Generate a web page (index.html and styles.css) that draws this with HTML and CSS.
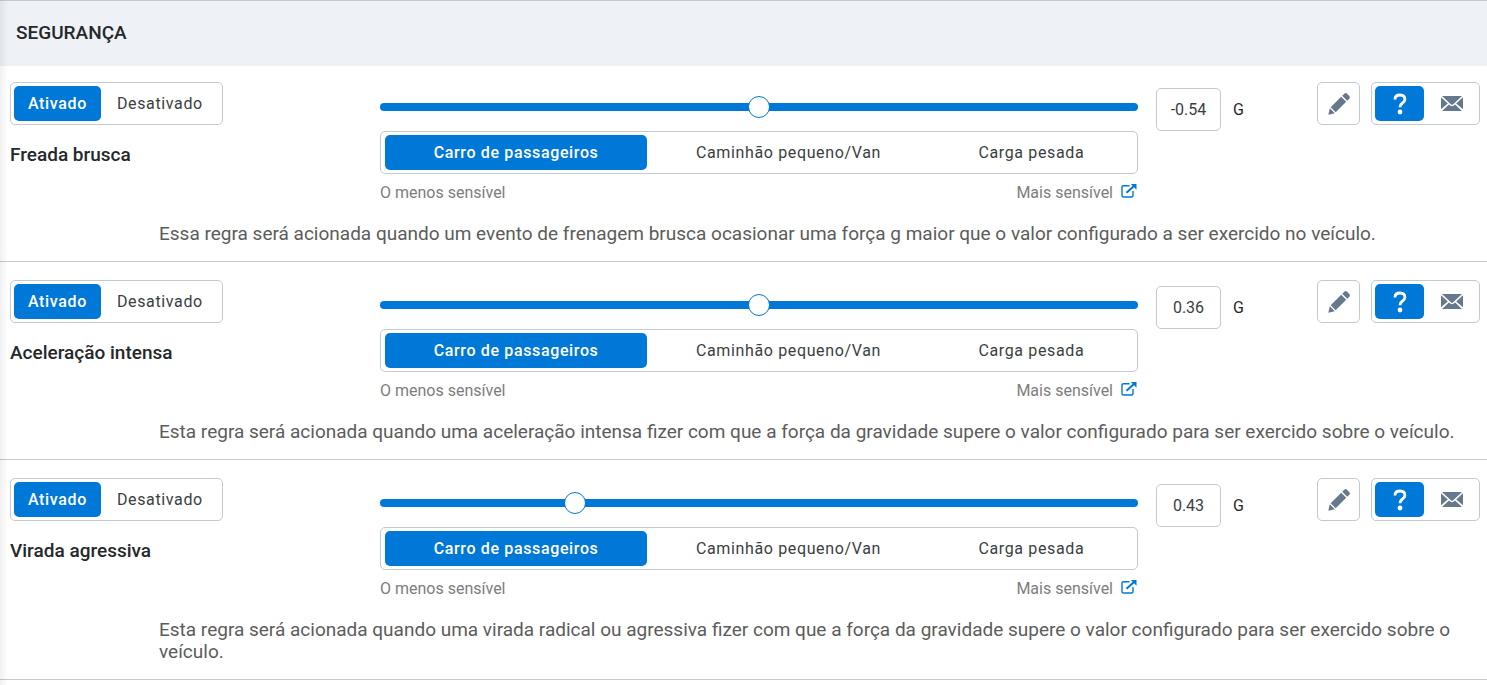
FILE: index.html
```html
<!DOCTYPE html>
<html lang="pt-BR">
<head>
	<meta charset="UTF-8">
	<meta name="viewport" content="width=device-width, initial-scale=1.0">
	<title>Segurança</title>
	<link rel="stylesheet" href="styles.css">
</head>
<body>
<svg class="sprite" aria-hidden="true">
	<symbol id="pencil" viewBox="0 0 22 22">
		<path d="M0.300 21.700L1.800 15.200L6.800 20.200Z"/>
		<path d="M2.700 14.300L13.200 3.800L18.200 8.800L7.700 19.300Z"/>
		<path d="M14.200 2.800L16.300 0.700Q17.700 -0.500 19.100 0.700L21.300 2.900Q22.500 4.300 21.300 5.700L19.200 7.800Z"/>
	</symbol>
	<symbol id="question" viewBox="0 0 14 22">
		<path d="M2 6.500V6Q2.200 2 7 2Q11.900 2.100 11.900 6.200Q11.900 8.200 9.500 10Q7 11.700 7 14.200" fill="none" stroke="currentColor" stroke-width="2.800"/>
		<circle cx="7" cy="19" r="2.400"/>
	</symbol>
	<symbol id="envelope" viewBox="0 0 22 15">
		<path d="M1 0H21L12.200 8.200Q11 9.200 9.800 8.200Z"/>
		<path d="M0 1.200L6.800 7.400L0 13.200ZM22 1.200L15.200 7.400L22 13.200Z"/>
		<path d="M1 15L7.900 8.500L9.200 9.600Q11 11 12.800 9.600L14.100 8.500L21 15Z"/>
	</symbol>
	<symbol id="external" viewBox="0 0 16 14">
		<path d="M8.500 1.700H2.500Q1 1.700 1 3.200V11.500Q1 13 2.500 13H10.500Q12 13 12 11.500V7" fill="none" stroke="currentColor" stroke-width="1.400"/>
		<path d="M5.500 8.800L13 2" fill="none" stroke="currentColor" stroke-width="2"/>
		<path d="M9.800 0H15.500V5.700Z"/>
	</symbol>
</svg>
<main class="rules">
	<h1 class="rules-title">SEGURANÇA</h1>

	<section class="rule">
		<div class="rule-grid">
			<div class="status">
				<div class="segmented">
					<button type="button" class="segment active" aria-pressed="true">Ativado</button>
					<button type="button" class="segment" aria-pressed="false">Desativado</button>
				</div>
				<h2 class="rule-name">Freada brusca</h2>
			</div>
			<div class="sensitivity">
				<input type="range" class="slider" min="0" max="100" value="50" aria-label="Sensibilidade: freada brusca">
				<div class="segmented vehicles">
					<button type="button" class="segment active" aria-pressed="true">Carro de passageiros</button>
					<button type="button" class="segment" aria-pressed="false">Caminhão pequeno/Van</button>
					<button type="button" class="segment" aria-pressed="false">Carga pesada</button>
				</div>
				<div class="scale">
					<span>O menos sensível</span>
					<span class="scale-end">Mais sensível
						<a href="#" aria-label="Abrir"><svg class="icon-external"><use href="#external"/></svg></a>
					</span>
				</div>
			</div>
			<label class="force"><input type="text" class="force-input" value="-0.54">G</label>
			<div class="actions">
				<button type="button" class="edit" aria-label="Editar"><svg class="icon-pencil"><use href="#pencil"/></svg></button>
				<div class="segmented notify">
					<button type="button" class="segment active" aria-label="Ajuda"><svg class="icon-question"><use href="#question"/></svg></button>
					<button type="button" class="segment" aria-label="E-mail"><svg class="icon-envelope"><use href="#envelope"/></svg></button>
				</div>
			</div>
		</div>
		<p class="description">Essa regra será acionada quando um evento de frenagem brusca ocasionar uma força g maior que o valor configurado a ser exercido no veículo.</p>
	</section>

	<section class="rule">
		<div class="rule-grid">
			<div class="status">
				<div class="segmented">
					<button type="button" class="segment active" aria-pressed="true">Ativado</button>
					<button type="button" class="segment" aria-pressed="false">Desativado</button>
				</div>
				<h2 class="rule-name">Aceleração intensa</h2>
			</div>
			<div class="sensitivity">
				<input type="range" class="slider" min="0" max="100" value="50" aria-label="Sensibilidade: aceleração intensa">
				<div class="segmented vehicles">
					<button type="button" class="segment active" aria-pressed="true">Carro de passageiros</button>
					<button type="button" class="segment" aria-pressed="false">Caminhão pequeno/Van</button>
					<button type="button" class="segment" aria-pressed="false">Carga pesada</button>
				</div>
				<div class="scale">
					<span>O menos sensível</span>
					<span class="scale-end">Mais sensível
						<a href="#" aria-label="Abrir"><svg class="icon-external"><use href="#external"/></svg></a>
					</span>
				</div>
			</div>
			<label class="force"><input type="text" class="force-input" value="0.36">G</label>
			<div class="actions">
				<button type="button" class="edit" aria-label="Editar"><svg class="icon-pencil"><use href="#pencil"/></svg></button>
				<div class="segmented notify">
					<button type="button" class="segment active" aria-label="Ajuda"><svg class="icon-question"><use href="#question"/></svg></button>
					<button type="button" class="segment" aria-label="E-mail"><svg class="icon-envelope"><use href="#envelope"/></svg></button>
				</div>
			</div>
		</div>
		<p class="description">Esta regra será acionada quando uma aceleração intensa fizer com que a força da gravidade supere o valor configurado para ser exercido sobre o veículo.</p>
	</section>

	<section class="rule">
		<div class="rule-grid">
			<div class="status">
				<div class="segmented">
					<button type="button" class="segment active" aria-pressed="true">Ativado</button>
					<button type="button" class="segment" aria-pressed="false">Desativado</button>
				</div>
				<h2 class="rule-name">Virada agressiva</h2>
			</div>
			<div class="sensitivity">
				<input type="range" class="slider" min="0" max="100" value="25" aria-label="Sensibilidade: virada agressiva">
				<div class="segmented vehicles">
					<button type="button" class="segment active" aria-pressed="true">Carro de passageiros</button>
					<button type="button" class="segment" aria-pressed="false">Caminhão pequeno/Van</button>
					<button type="button" class="segment" aria-pressed="false">Carga pesada</button>
				</div>
				<div class="scale">
					<span>O menos sensível</span>
					<span class="scale-end">Mais sensível
						<a href="#" aria-label="Abrir"><svg class="icon-external"><use href="#external"/></svg></a>
					</span>
				</div>
			</div>
			<label class="force"><input type="text" class="force-input" value="0.43">G</label>
			<div class="actions">
				<button type="button" class="edit" aria-label="Editar"><svg class="icon-pencil"><use href="#pencil"/></svg></button>
				<div class="segmented notify">
					<button type="button" class="segment active" aria-label="Ajuda"><svg class="icon-question"><use href="#question"/></svg></button>
					<button type="button" class="segment" aria-label="E-mail"><svg class="icon-envelope"><use href="#envelope"/></svg></button>
				</div>
			</div>
		</div>
		<p class="description">Esta regra será acionada quando uma virada radical ou agressiva fizer com que a força da gravidade supere o valor configurado para ser exercido sobre o veículo.</p>
	</section>
</main>
</body>
</html>
```

FILE: styles.css
```css
* {
	box-sizing: border-box;
}
body {
	margin: 0;
	background: #fff;
	color: #25282b;
	font-family: Roboto, sans-serif;
	font-size: 16px;
}
button,
input {
	font: inherit;
	color: inherit;
}
svg {
	display: block;
	fill: currentColor;
}
.sprite {
	display: none;
}
.rules {
	position: relative;
	min-height: 100vh;
}
/* soft shadow of the side panel */
.rules::before {
	content: "";
	position: absolute;
	top: 0;
	bottom: 0;
	left: 0;
	width: 8px;
	background: linear-gradient(to right, rgba(0, 0, 0, 0.06), rgba(0, 0, 0, 0));
	pointer-events: none;
}
.rules-title {
	margin: 0;
	padding: 20px 16px 21px;
	border-top: 1px solid #c4c8d0;
	background: #eef1f6;
	font-size: 19px;
	font-weight: 500;
	line-height: 24px;
}
.rule {
	padding: 18px 7px 16px 10px;
	border-bottom: 1px solid #c9c9cf;
}
.rules-title + .rule {
	padding-top: 16px;
}
.rule-grid {
	display: grid;
	grid-template-columns: 370px 1fr 179px 163px;
	align-items: start;
}
.segmented {
	display: inline-flex;
	height: 43px;
	padding: 3px;
	border: 1px solid #c4c8d0;
	border-radius: 5px;
	background: #fff;
}
.segment {
	display: flex;
	align-items: center;
	justify-content: center;
	padding: 0 14px;
	border: 0;
	border-radius: 5px;
	background: none;
	letter-spacing: 0.04em;
	color: #3b3e42;
	cursor: pointer;
}
.segment.active {
	background: #0078d7;
	color: #fff;
	font-weight: 500;
}
.segment + .segment {
	padding: 0 16px;
}
.rule-name {
	margin: 18px 0 0;
	font-size: 19px;
	font-weight: 500;
	line-height: 24px;
}
.slider {
	-webkit-appearance: none;
	appearance: none;
	display: block;
	width: 100%;
	height: 8px;
	margin: 21px 0 20px;
	border-radius: 4px;
	background: #0078d7;
}
.slider::-webkit-slider-thumb {
	-webkit-appearance: none;
	width: 22px;
	height: 22px;
	border: 1px solid #0078d7;
	border-radius: 50%;
	background: #fff;
}
.vehicles {
	display: flex;
	padding: 3px 4px;
}
.vehicles .segment {
	flex: 1 1 auto;
	padding: 0 14px;
}
.scale {
	display: flex;
	justify-content: space-between;
	margin-top: 9px;
	color: #7d7d7d;
	line-height: 20px;
}
.scale-end {
	display: flex;
	gap: 8px;
	padding-right: 1px;
}
.icon-external {
	width: 16px;
	height: 14px;
	margin-top: 1px;
	color: #0078d7;
}
.force {
	display: flex;
	align-items: center;
	gap: 12px;
	margin-top: 6px;
	margin-left: 18px;
}
.force-input {
	width: 65px;
	height: 43px;
	padding: 0;
	border: 1px solid #c4c8d0;
	border-radius: 5px;
	text-align: center;
	color: #3b3e42;
}
.actions {
	display: flex;
	justify-content: space-between;
}
.edit {
	display: flex;
	align-items: center;
	justify-content: center;
	width: 43px;
	height: 43px;
	padding: 0;
	border: 1px solid #c4c8d0;
	border-radius: 5px;
	background: #fff;
	color: #66788c;
}
.notify {
	gap: 4px;
	width: 109px;
}
.notify .segment {
	width: 49px;
	padding: 0;
}
.notify .segment + .segment {
	flex: 1;
	padding: 0;
	color: #66788c;
}
.icon-pencil {
	width: 22px;
	height: 22px;
}
.icon-question {
	width: 14px;
	height: 22px;
}
.icon-envelope {
	width: 22px;
	height: 15px;
}
.description {
	margin: 20px 20px 0 149px;
	color: #5c5c5c;
	font-size: 19px;
	line-height: 22px;
}
```
